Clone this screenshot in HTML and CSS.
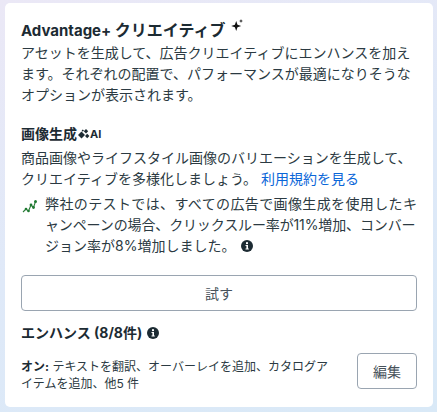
FILE: index.html
```html
<!DOCTYPE html>
<html lang="ja">
<head>
<meta charset="utf-8">
<title>Advantage+ クリエイティブ</title>
<link rel="stylesheet" href="styles.css">
</head>
<body>
<main class="card">
  <h1 class="title"><span>Advantage+ <span class="title-ja">クリエイティブ</span></span>
    <svg class="sparkle" viewBox="0 0 11 12" width="11" height="12"><path d="M4.200 2 5.500 5.700 9.200 7 5.500 8.300 4.200 12 2.900 8.300-.8 7 2.900 5.700Z"/><path d="M9 0 9.500 1.500 11 2 9.500 2.500 9 4 8.500 2.500 7 2 8.500 1.500Z"/></svg>
  </h1>
  <p class="text">アセットを生成して、広告クリエイティブにエンハンスを加えます。それぞれの配置で、パフォーマンスが最適になりそうなオプションが表示されます。</p>

  <h2 class="sub sub-gen">画像生成<svg class="gem" viewBox="0 0 12 10" width="12" height="10"><path d="M3.500 2.500 7 6 3.500 9.500 0 6Z"/><path d="M8 0 10.200 2.200 8 4.400 5.800 2.200Z"/><path d="M9.200 4.800 11.400 7 9.200 9.200 7 7Z"/><path d="M4.800.4 6 1.600 4.800 2.800 3.600 1.600Z"/></svg><span class="ai">AI</span></h2>
  <p class="text text-gen">商品画像やライフスタイル画像のバリエーションを生成して、クリエイティブを多様化しましょう。 <a class="link" href="#">利用規約を見る</a></p>

  <div class="note">
    <svg class="trend" viewBox="0 0 16 14" width="16" height="14"><path d="M1 13 4 10 6.500 12 9 6 11.500 8.500 13.500 2.500" fill="none" stroke="#2d7d3a" stroke-width="1.100"/><g fill="#1f7a32"><circle cx="4" cy="10" r="1.300"/><circle cx="6.500" cy="12" r="1.300"/><circle cx="9" cy="6" r="1.400"/><circle cx="11.500" cy="8.500" r="1.400"/><circle cx="13.500" cy="2.500" r="1.500"/></g></svg>
    <p class="note-text"><span class="note-line note-line-wide">弊社のテストでは、すべての広告で画像生成を使用したキ</span><span class="note-line note-line-tight">ャンペーンの場合、クリックスルー率が11%増加、コンバー</span><span class="note-line">ジョン率が8%増加しました。<svg class="info info-note" viewBox="0 0 12 12" width="12" height="12"><circle cx="6" cy="6" r="6"/><rect x="5" y="2.200" width="2" height="1.900" fill="#fff"/><path d="M4.500 5h2.500v3.600h.8v1H4.500v-1h.9V6h-.9Z" fill="#fff"/></svg></span>
    </p>
  </div>

  <button class="btn btn-try" type="button">試す</button>

  <h2 class="sub sub-enh">エンハンス (8/8件)
    <svg class="info" viewBox="0 0 12 12" width="12" height="12"><circle cx="6" cy="6" r="6"/><rect x="5" y="2.200" width="2" height="1.900" fill="#fff"/><path d="M4.500 5h2.500v3.600h.8v1H4.500v-1h.9V6h-.9Z" fill="#fff"/></svg>
  </h2>
  <div class="enh-row">
    <p class="enh-text"><b>オン:</b> テキストを翻訳、オーバーレイを追加、カタログアイテムを追加、他5 件</p>
    <button class="btn btn-edit" type="button">編集</button>
  </div>
</main>
</body>
</html>
```
FILE: styles.css
```css
body {
  margin: 0;
  padding: 3px 4px 5px 5px;
  box-sizing: border-box;
  height: 412px;
  overflow: hidden;
  background: linear-gradient(160deg, #ebe8f6 0%, #dfe9f8 50%, #d9e9f7 100%);
  font-family: Inter, "Noto Sans CJK JP", "Liberation Sans", sans-serif;
  color: #1c2b33;
}
.card {
  height: 404px;
  box-sizing: border-box;
  background: #fff;
  border-radius: 5px;
  padding: 16px 16px 0;
}
.title {
  margin: 0;
  font-size: 15px;
  line-height: 22px;
  font-weight: 700;
  display: flex;
  align-items: flex-start;
  gap: 6px;
}
.title-ja { font-size: 16px; }
.sparkle { fill: #111; flex: none; overflow: visible; }
.text {
  margin: 0;
  font-size: 14px;
  line-height: 21px;
  color: #2b3a42;
  text-spacing-trim: space-all;
}
.sub {
  margin: 0;
  font-size: 14px;
  font-weight: 700;
  line-height: 18px;
  display: flex;
  align-items: center;
}
.sub-gen { margin-top: 20px; }
.text-gen { margin-top: 4px; }
.gem { fill: #1c2b33; margin-left: 1px; }
.ai { font-size: 11px; }
.link { color: #0a66d8; text-decoration: none; }
.note {
  display: flex;
  gap: 7px;
  margin-top: 4px;
  padding-left: 1px;
}
.trend { flex: none; margin-top: 6px; }
.note-text {
  margin: 0;
  font-size: 14px;
  line-height: 21px;
  color: #2b3a42;
  text-spacing-trim: space-all;
}
.note-line { display: block; white-space: nowrap; }
.note-line-wide { letter-spacing: .38px; }
.note-line-tight { letter-spacing: -.13px; }
.info { fill: #1c2b33; flex: none; margin-left: 5px; }
.info-note { vertical-align: -1px; margin-left: 6px; }
.btn {
  display: block;
  background: #fff;
  border: 1px solid #9aa5b1;
  border-radius: 4px;
  font: inherit;
  font-size: 14px;
  color: #47525a;
  padding: 0;
}
.btn-try { width: 100%; height: 36px; margin-top: 19px; }
.sub-enh { margin-top: 12px; line-height: 20px; }
.enh-row {
  display: flex;
  align-items: flex-start;
  gap: 20px;
  margin-top: 10px;
}
.enh-text {
  margin: 5px 0 0;
  font-size: 12px;
  line-height: 17px;
  color: #2b3a42;
  flex: 1;
  text-spacing-trim: space-all;
}
.enh-text b { color: #1c2b33; }
.btn-edit { flex: none; width: 60px; height: 36px; }
```
